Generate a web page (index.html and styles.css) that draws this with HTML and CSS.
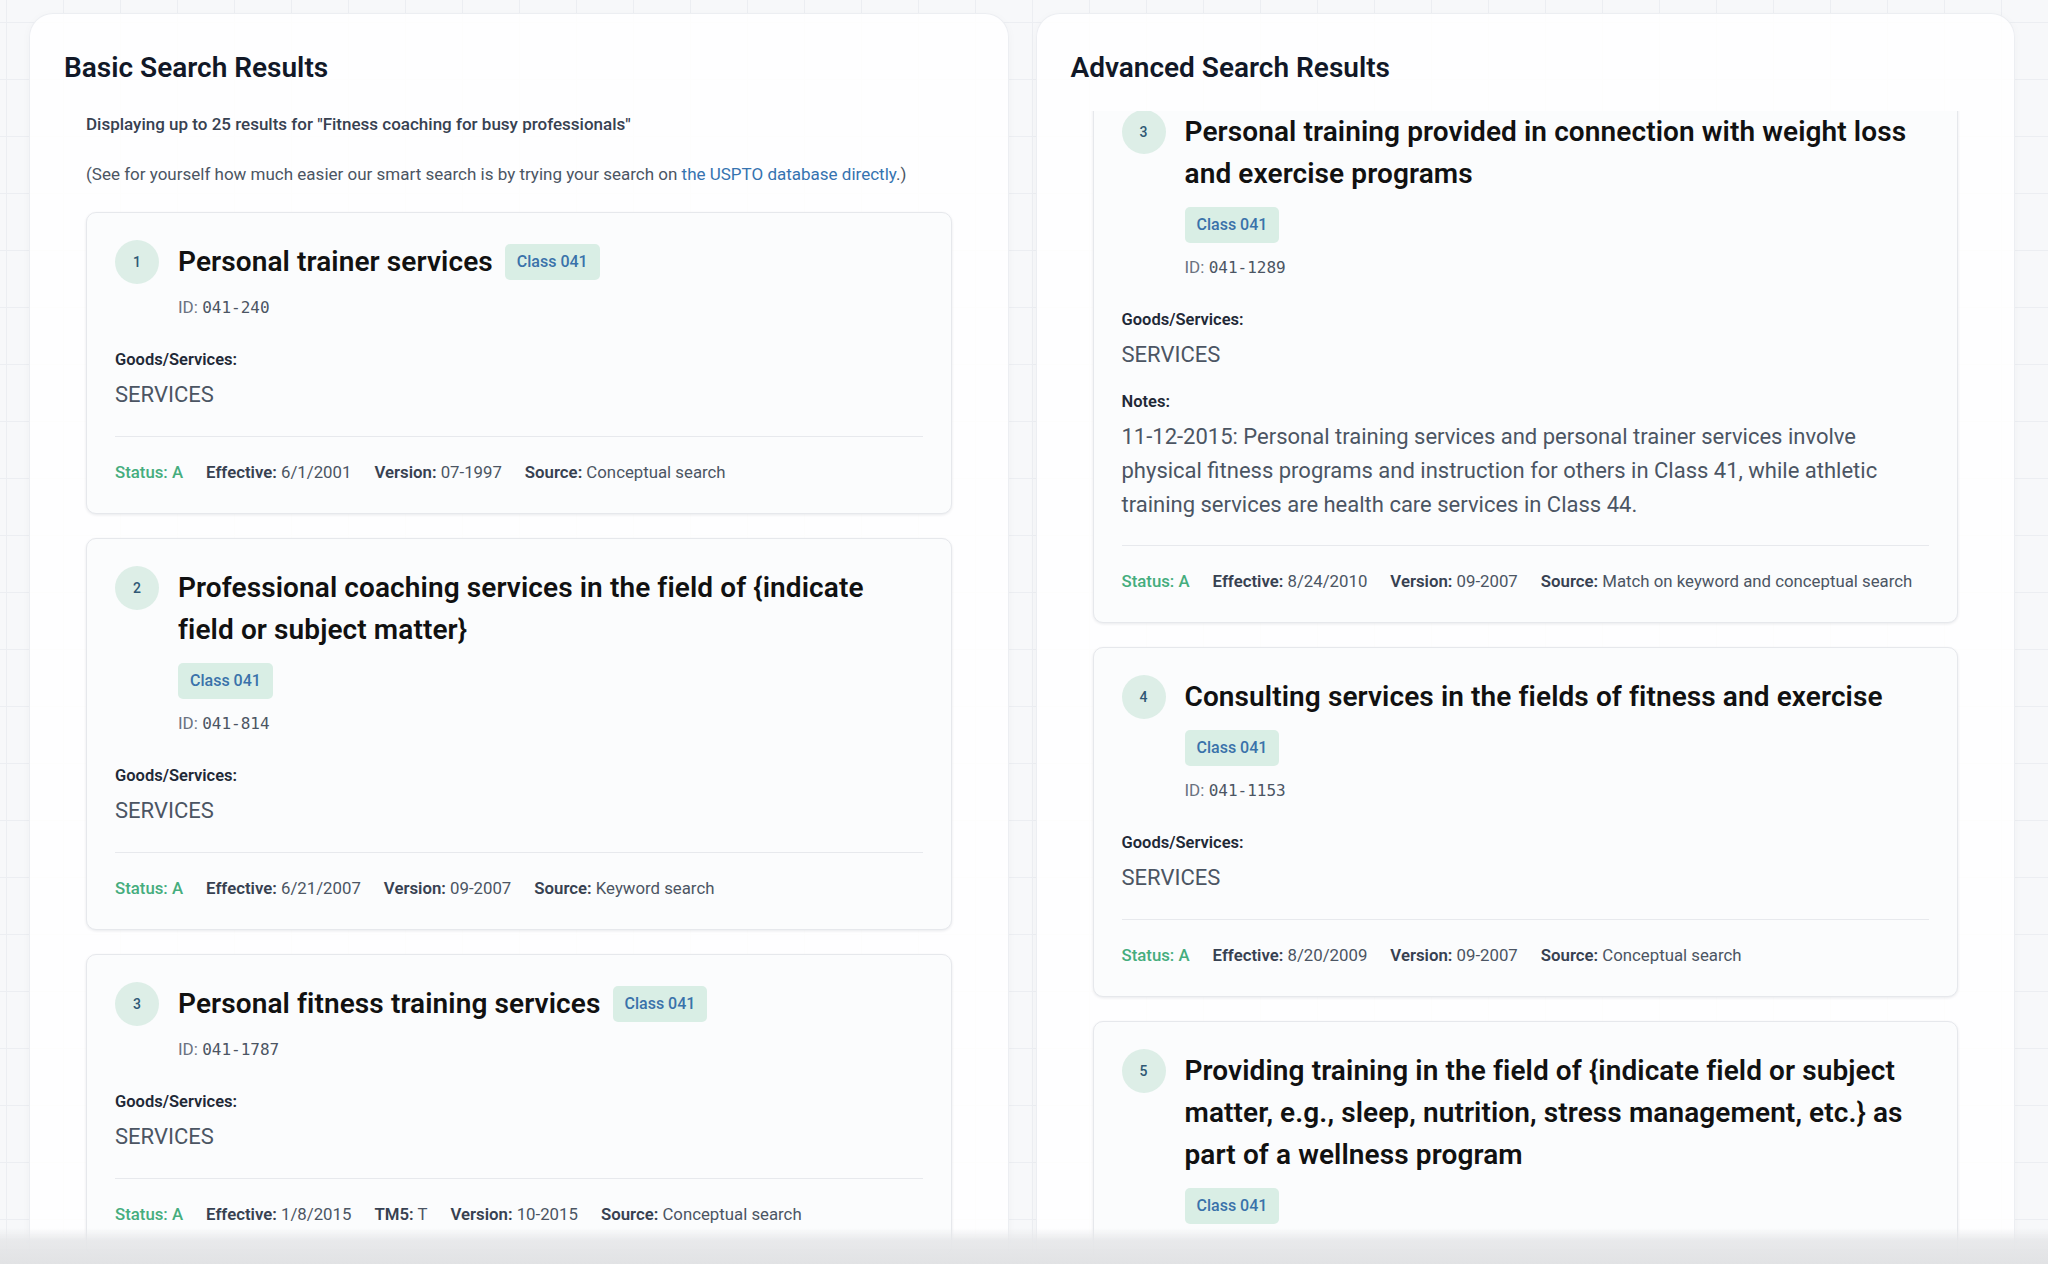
FILE: index.html
```html
<!DOCTYPE html>
<html lang="en">
<head>
<meta charset="utf-8">
<title>Search Results</title>
<link rel="stylesheet" href="styles.css">
</head>
<body>
<main class="page">
  <section class="panel">
    <h2 class="panel-title">Basic Search Results</h2>
    <div class="panel-body">
      <p class="intro-strong">Displaying up to 25 results for "Fitness coaching for busy professionals"</p>
      <p class="intro">(See for yourself how much easier our smart search is by trying your search on <a href="#" class="link">the USPTO database directly</a>.)</p>
      <div class="results">
        <article class="card">
          <div class="card-head">
            <span class="num">1</span>
            <div class="head-main">
              <div class="title-row">
                <h3 class="title">Personal trainer services</h3>
                <span class="badge">Class 041</span>
              </div>
              <div class="id">ID: <span class="mono">041-240</span></div>
            </div>
          </div>
          <div class="section">
            <div class="label">Goods/Services:</div>
            <div class="value">SERVICES</div>
          </div>
          <div class="footer">
            <span class="status">Status: A</span>
            <span><b>Effective:</b> 6/1/2001</span>
            <span><b>Version:</b> 07-1997</span>
            <span><b>Source:</b> Conceptual search</span>
          </div>
        </article>
        <article class="card">
          <div class="card-head">
            <span class="num">2</span>
            <div class="head-main">
              <div class="title-row">
                <h3 class="title">Professional coaching services in the field of {indicate field or subject matter}</h3>
                <span class="badge">Class 041</span>
              </div>
              <div class="id">ID: <span class="mono">041-814</span></div>
            </div>
          </div>
          <div class="section">
            <div class="label">Goods/Services:</div>
            <div class="value">SERVICES</div>
          </div>
          <div class="footer">
            <span class="status">Status: A</span>
            <span><b>Effective:</b> 6/21/2007</span>
            <span><b>Version:</b> 09-2007</span>
            <span><b>Source:</b> Keyword search</span>
          </div>
        </article>
        <article class="card">
          <div class="card-head">
            <span class="num">3</span>
            <div class="head-main">
              <div class="title-row">
                <h3 class="title">Personal fitness training services</h3>
                <span class="badge">Class 041</span>
              </div>
              <div class="id">ID: <span class="mono">041-1787</span></div>
            </div>
          </div>
          <div class="section">
            <div class="label">Goods/Services:</div>
            <div class="value">SERVICES</div>
          </div>
          <div class="footer">
            <span class="status">Status: A</span>
            <span><b>Effective:</b> 1/8/2015</span>
            <span><b>TM5:</b> T</span>
            <span><b>Version:</b> 10-2015</span>
            <span><b>Source:</b> Conceptual search</span>
          </div>
        </article>
      </div>
    </div>
  </section>

  <section class="panel">
    <h2 class="panel-title">Advanced Search Results</h2>
    <div class="scroll" id="adv">
      <div class="results">
        <article class="card">
          <div class="card-head">
            <span class="num">3</span>
            <div class="head-main">
              <div class="title-row">
                <h3 class="title">Personal training provided in connection with weight loss and exercise programs</h3>
                <span class="badge">Class 041</span>
              </div>
              <div class="id">ID: <span class="mono">041-1289</span></div>
            </div>
          </div>
          <div class="section">
            <div class="label">Goods/Services:</div>
            <div class="value">SERVICES</div>
          </div>
          <div class="section notes">
            <div class="label">Notes:</div>
            <div class="value">11-12-2015: Personal training services and personal trainer services involve physical fitness programs and instruction for others in Class 41, while athletic training services are health care services in Class 44.</div>
          </div>
          <div class="footer">
            <span class="status">Status: A</span>
            <span><b>Effective:</b> 8/24/2010</span>
            <span><b>Version:</b> 09-2007</span>
            <span><b>Source:</b> Match on keyword and conceptual search</span>
          </div>
        </article>
        <article class="card">
          <div class="card-head">
            <span class="num">4</span>
            <div class="head-main">
              <div class="title-row">
                <h3 class="title">Consulting services in the fields of fitness and exercise</h3>
                <span class="badge">Class 041</span>
              </div>
              <div class="id">ID: <span class="mono">041-1153</span></div>
            </div>
          </div>
          <div class="section">
            <div class="label">Goods/Services:</div>
            <div class="value">SERVICES</div>
          </div>
          <div class="footer">
            <span class="status">Status: A</span>
            <span><b>Effective:</b> 8/20/2009</span>
            <span><b>Version:</b> 09-2007</span>
            <span><b>Source:</b> Conceptual search</span>
          </div>
        </article>
        <article class="card card-tall">
          <div class="card-head">
            <span class="num">5</span>
            <div class="head-main">
              <div class="title-row">
                <h3 class="title">Providing training in the field of {indicate field or subject matter, e.g., sleep, nutrition, stress management, etc.} as part of a wellness program</h3>
                <span class="badge">Class 041</span>
              </div>
            </div>
          </div>
        </article>
      </div>
    </div>
  </section>
</main>
<div class="bottom-fade"></div>
<script src="script.js"></script>
</body>
</html>
```

FILE: styles.css
```css
* { box-sizing: border-box; }

html, body {
  margin: 0;
  height: 100%;
}

body {
  overflow: hidden;
  font-family: Roboto, "Noto Sans", "Liberation Sans", sans-serif;
  color: #111827;
  background-color: #f7f8fa;
  background-image:
    linear-gradient(to right, #eceef2 1px, transparent 1px),
    linear-gradient(to bottom, #eceef2 1px, transparent 1px);
  background-size: 57px 57px;
  background-position: 6px 22px;
}

.page {
  display: grid;
  grid-template-columns: 1fr 1fr;
  gap: 27px;
  height: 100vh;
  padding: 13px 33px 0 29px;
}

.panel {
  display: flex;
  flex-direction: column;
  min-height: 0;
  overflow: hidden;
  padding: 0 34px;
  background: rgba(255, 255, 255, 0.86);
  border: 1px solid #eceef2;
  border-bottom: none;
  border-radius: 24px 24px 0 0;
  box-shadow: 0 2px 10px rgba(15, 23, 42, 0.03);
}

.panel-title {
  margin: 38px 0 27px;
  font-size: 28px;
  line-height: 32px;
  font-weight: 600;
  color: #111827;
}

.panel-body {
  padding: 0 22px;
}

.intro-strong {
  margin: 0;
  font-size: 17px;
  line-height: 26px;
  font-weight: 500;
  color: #374151;
}

.intro {
  margin: 24px 0 25px;
  font-size: 17px;
  line-height: 26px;
  color: #4b5563;
}

.link {
  color: #3573b0;
  text-decoration: none;
}

.scroll {
  flex: 1;
  min-height: 0;
  overflow-y: auto;
  scrollbar-width: none;
  padding: 0 22px 40px;
}

.scroll::-webkit-scrollbar { display: none; }

.results {
  display: flex;
  flex-direction: column;
  gap: 24px;
  padding-bottom: 40px;
}

.card {
  background: #fbfcfd;
  border: 1px solid #e6e8ec;
  border-radius: 10px;
  box-shadow: 0 1px 3px rgba(16, 24, 40, 0.09);
  padding: 28px 28px 29px 28px;
}

.card-tall {
  padding-bottom: 120px;
}

.card-head {
  display: flex;
  align-items: flex-start;
  gap: 19px;
}

.num {
  flex: none;
  width: 44px;
  height: 44px;
  border-radius: 50%;
  background: #ddeee7;
  color: #2f5875;
  font-size: 14px;
  font-weight: 500;
  display: flex;
  align-items: center;
  justify-content: center;
  margin-top: -1px;
}

.head-main {
  flex: 1;
  min-width: 0;
  padding-right: 12px;
}

.title-row {
  display: flex;
  flex-wrap: wrap;
  align-items: center;
  column-gap: 12px;
  row-gap: 12px;
}

.title {
  margin: 0;
  font-size: 28px;
  line-height: 42px;
  font-weight: 600;
  letter-spacing: 0.1px;
  color: #111111;
}

.badge {
  font-size: 16px;
  line-height: 20px;
  font-weight: 500;
  color: #3a72aa;
  background: #d9eee5;
  padding: 8px 12px;
  border-radius: 5px;
}

.id {
  margin-top: 12px;
  height: 24px;
  font-size: 17px;
  line-height: 24px;
  color: #6b7280;
}

.mono {
  font-family: "DejaVu Sans Mono", "Liberation Mono", monospace;
  font-size: 16px;
  line-height: 1;
  color: #4b5563;
}

.section {
  margin-top: 30px;
}

.section.notes {
  margin-top: 21px;
}

.label {
  font-size: 16.5px;
  line-height: 22px;
  font-weight: 600;
  color: #1f2937;
}

.value {
  margin-top: 9px;
  font-size: 22px;
  line-height: 30px;
  color: #4b5563;
}

.notes .value {
  margin-top: 7px;
  line-height: 34px;
}

.notes + .footer {
  margin-top: 23px;
}

.footer {
  margin-top: 26px;
  border-top: 1px solid #e7e9ed;
  padding-top: 23px;
  display: flex;
  flex-wrap: wrap;
  column-gap: 23px;
  height: 48px;
  font-size: 16.8px;
  line-height: 24px;
  color: #4b5563;
}

.footer b {
  font-weight: 600;
  color: #374151;
}

.status {
  color: #45ad7d;
  font-weight: 500;
}

.bottom-fade {
  position: fixed;
  left: 0;
  right: 0;
  bottom: 0;
  height: 36px;
  pointer-events: none;
  background: linear-gradient(to bottom, rgba(232, 233, 235, 0) 0%, rgba(230, 231, 233, 0.9) 35%, #e1e2e4 100%);
}
```

FILE: script.js
```js
document.getElementById('adv').scrollTop = 29;
```
